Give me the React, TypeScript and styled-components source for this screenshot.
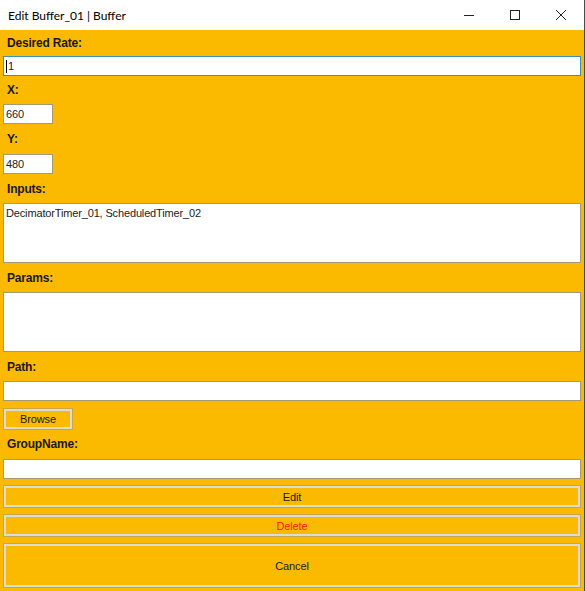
import React from 'react'
import styled, { createGlobalStyle } from 'styled-components'

const GlobalStyle = createGlobalStyle`
  html, body {
    margin: 0;
    padding: 0;
    background: #fbb900;
  }
`

const StyledWindow = styled.div`
  width: 585px;
  height: 591px;
  display: flex;
  flex-direction: column;
  background-color: #fbb900;
  border-right: 1px solid #4a4a4a;
  box-sizing: border-box;
  overflow: hidden;
`

const StyledTitleBar = styled.div`
  height: 30px;
  flex-shrink: 0;
  display: flex;
  align-items: center;
  background-color: #ffffff;
  padding-left: 8px;
`

const StyledTitle = styled.span`
  flex: 1;
  font-family: Lato, 'Noto Sans', sans-serif;
  font-size: 12px;
  color: #000;
`

const StyledWinButton = styled.div`
  width: 46px;
  height: 30px;
  display: flex;
  align-items: center;
  justify-content: center;
`

const StyledForm = styled.div`
  display: flex;
  flex-direction: column;
  padding: 0 3px 0 3px;
  font-family: 'Liberation Sans', Arial, sans-serif;
  font-size: 11px;
`

const StyledLabel = styled.div<{ $h: number }>`
  height: ${(p) => p.$h}px;
  display: flex;
  align-items: center;
  padding-left: 4px;
  font-size: 12px;
  font-weight: bold;
  color: #1a1a1a;
  letter-spacing: -0.2px;
`

const StyledBox = styled.div<{ $w?: number; $h?: number; $focused?: boolean }>`
  width: ${(p) => (p.$w ? `${p.$w}px` : '100%')};
  height: ${(p) => p.$h ?? 20}px;
  box-sizing: border-box;
  background-color: #ffffff;
  border: 1px solid ${(p) => (p.$focused ? '#3c93b4' : '#a59a72')};
  padding: 3px 2px;
  color: #222;
  line-height: 13px;
  letter-spacing: -0.15px;
  display: flex;
  align-items: ${(p) => (p.$h && p.$h > 30 ? 'flex-start' : 'center')};
  white-space: nowrap;
`

const StyledCaret = styled.span`
  display: inline-block;
  width: 1px;
  height: 13px;
  background: #000;
  margin-right: 1px;
`

const StyledButton = styled.button<{ $w?: number; $h?: number; $danger?: boolean; $gap?: number }>`
  width: ${(p) => (p.$w ? `${p.$w}px` : 'calc(100% - 2px)')};
  height: ${(p) => p.$h ?? 21}px;
  margin: ${(p) => p.$gap ?? 8}px 0 0 1px;
  box-sizing: border-box;
  background-color: #fbb900;
  border: 2px solid #dcdcd6;
  outline: 1px solid #c9a64a;
  font-family: 'Liberation Sans', Arial, sans-serif;
  font-size: 11px;
  letter-spacing: -0.15px;
  color: ${(p) => (p.$danger ? '#ff1a00' : '#1a1a1a')};
  padding: 0;
  cursor: pointer;
`

const App = () => {
  return (
    <>
      <GlobalStyle />
      <StyledWindow>
        <StyledTitleBar>
          <StyledTitle>Edit Buffer_01 | Buffer</StyledTitle>
          <StyledWinButton>
            <svg width="12" height="12" viewBox="0 0 12 12">
              <path d="M1 6.5h10" stroke="#222" strokeWidth="1" />
            </svg>
          </StyledWinButton>
          <StyledWinButton>
            <svg width="12" height="12" viewBox="0 0 12 12">
              <rect x="1.5" y="1.5" width="9" height="9" fill="none" stroke="#222" strokeWidth="1" />
            </svg>
          </StyledWinButton>
          <StyledWinButton>
            <svg width="12" height="12" viewBox="0 0 12 12">
              <path d="M1 1l10 10M11 1L1 11" stroke="#222" strokeWidth="1" />
            </svg>
          </StyledWinButton>
        </StyledTitleBar>

        <StyledForm>
          <StyledLabel $h={26}>Desired Rate:</StyledLabel>
          <StyledBox $focused>
            <StyledCaret />1
          </StyledBox>
          <StyledLabel $h={28}>X:</StyledLabel>
          <StyledBox $w={50}>660</StyledBox>
          <StyledLabel $h={30}>Y:</StyledLabel>
          <StyledBox $w={50}>480</StyledBox>
          <StyledLabel $h={29}>Inputs:</StyledLabel>
          <StyledBox $h={60}>DecimatorTimer_01, ScheduledTimer_02</StyledBox>
          <StyledLabel $h={29}>Params:</StyledLabel>
          <StyledBox $h={60} />
          <StyledLabel $h={29}>Path:</StyledLabel>
          <StyledBox />
          <StyledButton $w={68} $h={20}>Browse</StyledButton>
          <StyledLabel $h={30}>GroupName:</StyledLabel>
          <StyledBox />
          <StyledButton $gap={7}>Edit</StyledButton>
          <StyledButton $danger>Delete</StyledButton>
          <StyledButton $h={43}>Cancel</StyledButton>
        </StyledForm>
      </StyledWindow>
    </>
  )
}

export default App
